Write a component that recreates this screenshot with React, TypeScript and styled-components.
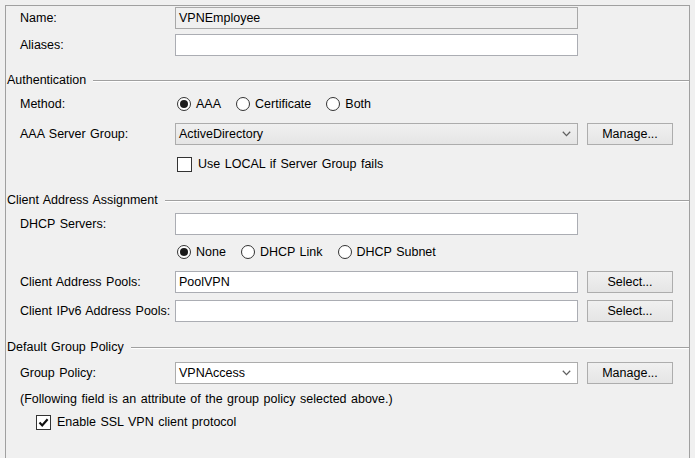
import styled, { createGlobalStyle } from "styled-components";

const GlobalStyle = createGlobalStyle`
    html, body {
        margin : 0;
        padding : 0;
        background : #f0f0f0;
        font-family : 'Liberation Sans', Arial, sans-serif;
        font-size : 12.5px;
        word-spacing : 1px;
        color : #000;
    }
`

const App = () => {
    return (
        <>
            <GlobalStyle />
            <StPage>
                <StPanel>
                    <StRow $mt={1}>
                        <StLabel>Name:</StLabel>
                        <StField $disabled>VPNEmployee</StField>
                    </StRow>
                    <StRow $mt={5}>
                        <StLabel>Aliases:</StLabel>
                        <StField />
                    </StRow>

                    <StSection $mt={17}>
                        <StSectionTitle>Authentication</StSectionTitle>
                        <StSectionLine />
                    </StSection>
                    <StRow $mt={7} $h={20}>
                        <StLabel>Method:</StLabel>
                        <StOptions>
                            <Radio checked label="AAA" />
                            <Radio label="Certificate" />
                            <Radio label="Both" />
                        </StOptions>
                    </StRow>
                    <StRow $mt={9}>
                        <StLabel>AAA Server Group:</StLabel>
                        <Select value="ActiveDirectory" tone="gray" />
                        <StButton>Manage...</StButton>
                    </StRow>
                    <StRow $mt={9} $h={20}>
                        <StLabel />
                        <Check label="Use LOCAL if Server Group fails" />
                    </StRow>

                    <StSection $mt={19}>
                        <StSectionTitle>Client Address Assignment</StSectionTitle>
                        <StSectionLine />
                    </StSection>
                    <StRow $mt={6}>
                        <StLabel>DHCP Servers:</StLabel>
                        <StField />
                    </StRow>
                    <StRow $mt={7} $h={20}>
                        <StLabel />
                        <StOptions>
                            <Radio checked label="None" />
                            <Radio label="DHCP Link" />
                            <Radio label="DHCP Subnet" />
                        </StOptions>
                    </StRow>
                    <StRow $mt={9}>
                        <StLabel>Client Address Pools:</StLabel>
                        <StField>PoolVPN</StField>
                        <StButton>Select...</StButton>
                    </StRow>
                    <StRow $mt={7}>
                        <StLabel>Client IPv6 Address Pools:</StLabel>
                        <StField />
                        <StButton>Select...</StButton>
                    </StRow>

                    <StSection $mt={18}>
                        <StSectionTitle>Default Group Policy</StSectionTitle>
                        <StSectionLine />
                    </StSection>
                    <StRow $mt={8}>
                        <StLabel>Group Policy:</StLabel>
                        <Select value="VPNAccess" tone="white" />
                        <StButton>Manage...</StButton>
                    </StRow>
                    <StRow $mt={5} $h={20}>
                        <StNote>(Following field is an attribute of the group policy selected above.)</StNote>
                    </StRow>
                    <StRow $mt={3} $h={20}>
                        <StIndent>
                            <Check checked label="Enable SSL VPN client protocol" />
                        </StIndent>
                    </StRow>
                    <StSpacer />
                </StPanel>
            </StPage>
        </>
    );
};

export default App;

const Radio = ({ checked, label } : { checked? : boolean, label : string }) => {
    return (
        <StOption>
            <StRadio>{checked && <StRadioDot />}</StRadio>
            <span>{label}</span>
        </StOption>
    );
};

const Check = ({ checked, label } : { checked? : boolean, label : string }) => {
    return (
        <StOption $gap={6}>
            <StCheckBox>
                {checked && (
                    <svg width="11" height="11" viewBox="0 0 11 11">
                        <path d="M1.5 5.6 L4.2 8.4 L9.6 2.2" fill="none" stroke="#111" strokeWidth="2.2" />
                    </svg>
                )}
            </StCheckBox>
            <span>{label}</span>
        </StOption>
    );
};

const Select = ({ value, tone } : { value : string, tone : 'gray' | 'white' }) => {
    return (
        <StSelect $tone={tone}>
            <span>{value}</span>
            <svg width="9" height="6" viewBox="0 0 9 6">
                <path d="M0.8 0.8 L4.5 4.6 L8.2 0.8" fill="none" stroke="#606060" strokeWidth="1.3" />
            </svg>
        </StSelect>
    );
};

const StPage = styled.div`
    padding : 5px 0 0 5px;
    width : 695px;
    height : 458px;
    box-sizing : border-box;
    overflow : hidden;
`

const StPanel = styled.div`
    width : 685px;
    box-sizing : border-box;
    border : 1px solid #a0a0a0;
    border-bottom : none;
    display : flex;
    flex-direction : column;
`

const StRow = styled.div<{ $mt : number, $h? : number }>`
    display : flex;
    align-items : center;
    margin-top : ${({ $mt }) => $mt}px;
    height : ${({ $h }) => $h ?? 22}px;
    padding-left : 14px;
`

const StLabel = styled.div`
    width : 155px;
    flex : none;
    white-space : nowrap;
`

const StField = styled.div<{ $disabled? : boolean }>`
    width : 403px;
    height : 22px;
    box-sizing : border-box;
    border : 1px solid ${({ $disabled }) => $disabled ? '#a8a8a8' : '#abadb3'};
    background : ${({ $disabled }) => $disabled ? '#f0f0f0' : '#ffffff'};
    display : flex;
    align-items : center;
    padding-left : 3px;
    flex : none;
`

const StSelect = styled.div<{ $tone : 'gray' | 'white' }>`
    width : 403px;
    height : 22px;
    box-sizing : border-box;
    border : 1px solid #acacac;
    background : ${({ $tone }) => $tone === 'gray' ? 'linear-gradient(#f0f0f0, #e5e5e5)' : '#ffffff'};
    display : flex;
    align-items : center;
    justify-content : space-between;
    padding : 0 6px 0 3px;
    flex : none;
`

const StButton = styled.div`
    margin-left : 9px;
    width : 86px;
    height : 22px;
    box-sizing : border-box;
    border : 1px solid #adadad;
    background : linear-gradient(#f0f0f0, #e5e5e5);
    display : flex;
    align-items : center;
    justify-content : center;
    flex : none;
`

const StSection = styled.div<{ $mt : number }>`
    display : flex;
    align-items : center;
    margin-top : ${({ $mt }) => $mt}px;
    height : 14px;
    margin-left : 1px;
`

const StSectionTitle = styled.div`
    flex : none;
    padding-right : 7px;
    margin-top : -1px;
`

const StSectionLine = styled.div`
    flex : 1;
    border-top : 1px solid #a0a0a0;
    border-bottom : 1px solid #ffffff;
    margin-top : 1px;
`

const StOptions = styled.div`
    display : flex;
    align-items : center;
    gap : 15px;
    padding-left : 2px;
`

const StOption = styled.div<{ $gap? : number }>`
    display : flex;
    align-items : center;
    gap : ${({ $gap }) => $gap ?? 5}px;
`

const StRadio = styled.div`
    width : 14px;
    height : 14px;
    box-sizing : border-box;
    border : 1px solid #333;
    border-radius : 50%;
    background : #fff;
    display : flex;
    align-items : center;
    justify-content : center;
`

const StRadioDot = styled.div`
    width : 8px;
    height : 8px;
    border-radius : 50%;
    background : #1a1a1a;
`

const StCheckBox = styled.div`
    width : 15px;
    height : 15px;
    margin-left : 2px;
    box-sizing : border-box;
    border : 1px solid #333;
    background : #fff;
    display : flex;
    align-items : center;
    justify-content : center;
`

const StNote = styled.div`
    white-space : nowrap;
`

const StIndent = styled.div`
    padding-left : 14px;
`

const StSpacer = styled.div`
    height : 40px;
`
